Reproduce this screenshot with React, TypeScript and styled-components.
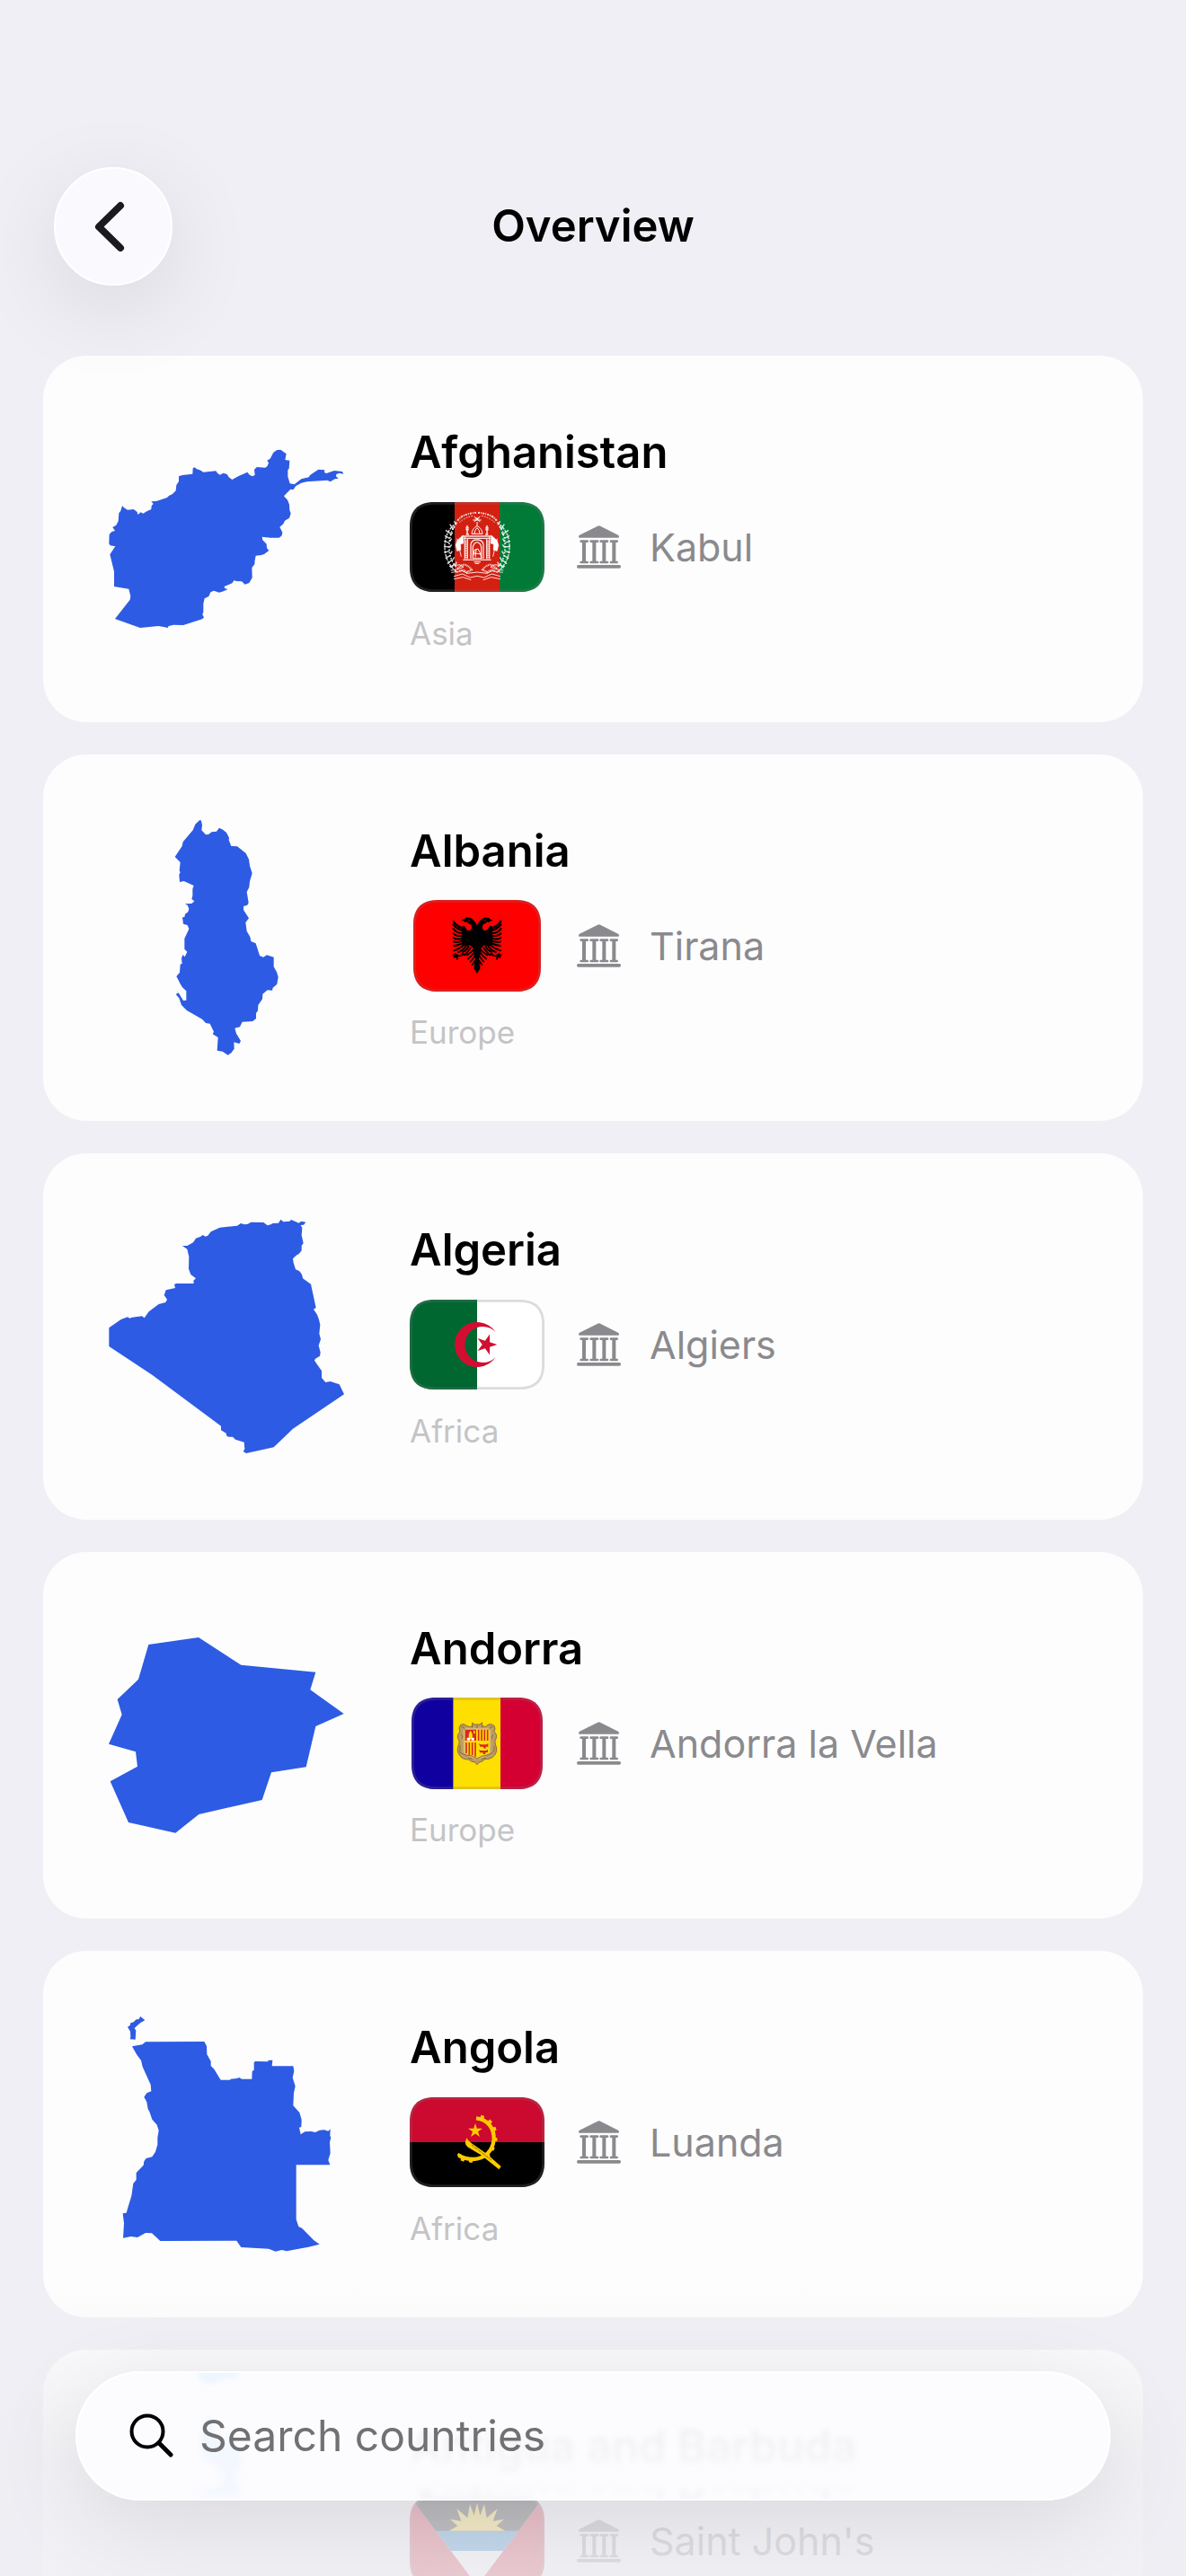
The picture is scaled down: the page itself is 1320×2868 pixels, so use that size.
import React, { useState } from 'react';
import styled, { createGlobalStyle } from 'styled-components';

interface ICountry {
  name: string;
  capital: string;
  continent?: string;
  viewBox: string;
  outline: string;
  flag: React.ReactNode;
  tint?: string;
}

const GlobalStyle = createGlobalStyle`
  * {
    box-sizing: border-box;
  }

  body {
    margin: 0;
    background: #f0eff5;
    color: #000;
    font-family: Inter, 'Liberation Sans', sans-serif;
  }
`;

const Screen = styled.div`
  position: relative;
  height: 100vh;
  overflow: hidden;
`;

const Scroller = styled.div`
  height: 100%;
  overflow-y: auto;
  scrollbar-width: none;
`;

const Header = styled.header`
  position: relative;
  z-index: 1;
  display: grid;
  grid-template-columns: 132px 1fr 132px;
  align-items: center;
  padding: 186px 60px 78px;
`;

const BackButton = styled.button`
  width: 132px;
  height: 132px;
  padding: 0;
  border: 2px solid #fff;
  border-radius: 50%;
  background: #faf9fe;
  box-shadow: 0 24px 100px rgba(0, 0, 0, 0.1);
  cursor: pointer;

  svg {
    display: block;
  }
`;

const Heading = styled.h1`
  margin: 0;
  font-size: 49px;
  line-height: 60px;
  font-weight: 600;
  text-align: center;
`;

const List = styled.ul`
  display: flex;
  flex-flow: column nowrap;
  gap: 36px;
  margin: 0;
  padding: 0 48px 36px;
  list-style: none;
`;

const Card = styled.li`
  display: flex;
  gap: 72px;
  padding: 72px;
  border-radius: 48px;
  background: #fdfdfd;
`;

const MapShape = styled.svg`
  flex: none;
  width: 264px;
  height: 264px;
  overflow: visible;
`;

const Info = styled.div`
  display: flex;
  flex-flow: column nowrap;
  gap: 24px;
  min-width: 0;
  padding-top: 6px;
`;

const Name = styled.h2<{ $mirrored: boolean }>`
  margin: 0;
  font-size: 49px;
  line-height: 60px;
  font-weight: 600;
  white-space: nowrap;
  ${({ $mirrored }) =>
    $mirrored && '-webkit-box-reflect: below -21px linear-gradient(#fff 38%, transparent 38%);'}
`;

const CapitalRow = styled.div`
  display: flex;
  align-items: center;
  height: 102px;
`;

const FlagSlot = styled.div`
  display: flex;
  justify-content: center;
  width: 150px;
  margin-right: 36px;
`;

const Capital = styled.span`
  margin-left: 32px;
  color: #8a8a8e;
  font-size: 43px;
  line-height: 54px;
  white-space: nowrap;
`;

const Continent = styled.span`
  color: #c4c4c6;
  font-size: 35px;
  line-height: 42px;
`;

const BottomFade = styled.div`
  position: absolute;
  right: 0;
  bottom: 0;
  left: 0;
  height: 320px;
  background: linear-gradient(
    rgba(240, 239, 245, 0) 0%,
    rgba(240, 239, 244, 0.35) 22%,
    rgba(239, 238, 243, 0.74) 60%,
    rgba(239, 238, 243, 0.84) 100%
  );
  pointer-events: none;
`;

const SearchBar = styled.label`
  position: absolute;
  right: 84px;
  bottom: 84px;
  left: 84px;
  display: flex;
  align-items: center;
  gap: 28px;
  height: 144px;
  padding: 0 60px;
  border-radius: 72px;
  background: rgba(253, 253, 255, 0.88);
  box-shadow:
    inset 0 0 0 2px rgba(255, 255, 255, 0.8),
    0 24px 100px rgba(0, 0, 0, 0.1);
  backdrop-filter: blur(3px);

  svg {
    flex: none;
  }
`;

const SearchInput = styled.input`
  flex: 1;
  min-width: 0;
  padding: 0;
  border: 0;
  outline: none;
  background: transparent;
  color: #000;
  font-family: inherit;
  font-size: 48px;
  line-height: 60px;

  &::placeholder {
    color: #717174;
    opacity: 1;
  }
`;

const CapitalIcon = () => (
  <svg width="49" height="48" viewBox="0 0 147 144" fill="#8a8a8e" aria-hidden="true">
    <path d="M68 3Q74 -1 80 3L138 32Q141 34 141 38Q141 41 138 41H9Q6 41 6 38Q6 34 9 32Z" />
    <path d="M14 53H35M47 53H69M80 53H102M114 53H134M14 123H35M47 123H69M80 123H102M114 123H134" stroke="#8a8a8e" strokeWidth="8" strokeLinecap="round" />
    <path d="M18 52H30V123H18ZM52 52H64V123H52ZM85 52H97V123H85ZM118 52H130V123H118Z" />
    <rect x="0" y="132" width="147" height="11" rx="5" />
  </svg>
);

interface IFlagFrameProps {
  id: string;
  width: number;
  height: number;
  edge?: string;
  children: React.ReactNode;
}

// three drawing units to each pixel
const FlagFrame: React.FC<IFlagFrameProps> = ({ id, width, height, edge = '#777', children }) => {
  const w = width * 3;
  const h = height * 3;
  const shape = `M82 0H${w - 82}C${w - 28} 0 ${w} 28 ${w} 82V${h - 82}C${w} ${h - 28} ${w - 28} ${h} ${w - 82} ${h}H82C28 ${h} 0 ${h - 28} 0 ${h - 82}V82C0 28 28 0 82 0Z`;
  return (
    <svg width={width} height={height} viewBox={`0 0 ${w} ${h}`} aria-hidden="true">
      <clipPath id={id}>
        <path d={shape} />
      </clipPath>
      <g clipPath={`url(#${id})`}>
        {children}
        <path d={shape} fill="none" stroke={edge} strokeOpacity="0.26" strokeWidth="17" />
      </g>
    </svg>
  );
};

const starPoints = (cx: number, cy: number, r: number, turn: number) =>
  Array.from({ length: 10 }, (_, i) => {
    const radius = i % 2 ? r * 0.382 : r;
    const angle = turn + (i * Math.PI) / 5;
    return `${cx + radius * Math.cos(angle)},${cy + radius * Math.sin(angle)}`;
  }).join(' ');

const EmblemHalf = () => (
  <g fill="none" stroke="#fff" strokeOpacity="0.85">
    <path d="M158 68C128 88 116 120 117 152C118 186 132 214 160 236" strokeWidth="4" strokeDasharray="9 3" />
    <path d="M150 80C136 100 132 124 132 150C132 184 143 208 166 226" strokeWidth="5" strokeDasharray="5 5" />
    <path d="M156 76L148 64M146 92L134 74M138 106L120 94M134 122L117 112M132 136L115 130M132 150L114 148M133 164L115 168M136 178L119 188M142 192L126 206M150 206L136 220M144 90L150 82M136 112L143 102M133 132L140 122M133 152L140 142M136 174L142 164M143 194L149 184M152 210L157 200" strokeWidth="4" />
    <path d="M160 62Q174 40 222 35" strokeWidth="6" strokeDasharray="7 3 3 3" />
    <path d="M166 68Q184 51 210 46" strokeWidth="3" strokeDasharray="5 4" />
    <path d="M192 78V108M187 86H197M187 92H197M188 108H198" strokeWidth="5" />
    <path d="M176 114H225M180 121H225M178 193H225M184 114V190M193 122V190" strokeWidth="4" />
    <path d="M188 128V190" strokeWidth="8" strokeDasharray="3 3" />
    <path d="M204 190V142Q206 126 225 126M211 190V150Q214 136 225 134" strokeWidth="4" />
    <path d="M158 122L172 182" strokeWidth="3" />
    <path d="M158 128L178 110L180 138L170 141L171 160L158 164L153 144Z" fill="#fff" strokeWidth="1" />
    <path d="M132 215L166 209L180 217L158 225L137 228M139 235L176 230L192 238L225 234M147 248L176 240L202 252L225 247M147 257L178 251L205 260" strokeWidth="3" />
    <path d="M164 218Q184 197 207 226L190 235Q177 221 164 232" strokeWidth="6" strokeDasharray="3 2" />
  </g>
);

const AfghanFlag = () => (
  <FlagFrame id="flag-af" width={150} height={100}>
    <path fill="#000" d="M0 0H150V300H0Z" />
    <path fill="#d32011" d="M150 0H300V300H150Z" />
    <path fill="#007a36" d="M300 0H450V300H300Z" />
    <EmblemHalf />
    <g transform="translate(450 0) scale(-1 1)">
      <EmblemHalf />
    </g>
    <g fill="none" stroke="#fff" strokeWidth="3">
      <path d="M207 106C208 92 218 82 225 80C232 82 242 92 243 106ZM216 105Q217 92 225 86Q233 92 234 105M225 80V66M211 60H239M218 54L232 54M215 48L235 66M235 48L215 66" />
      <path d="M213 178L216 160L228 156L235 170L240 188M212 188L240 188M215 171L234 173M222 157L219 184" />
      <path d="M214 200H237M218 205H232" />
    </g>
  </FlagFrame>
);

const EagleHalf = () => (
  <g>
    <path d="M213 86C211 78 204 68 195 62C187 57 175 58 169 64L160 68C166 68 169 72 174 75L181 72C178 79 190 77 194 85C198 96 191 105 182 101C174 99 177 88 168 86C162 86 164 94 157 94C151 91 146 86 143 78L132 62L139 78L148 92L162 98V150L176 154L188 150L199 160L201 178L207 198L203 220L203 230L208 237L213 246Z" />
    <path fill="none" stroke="#000" strokeWidth="6" d="M132 70Q146 88 164 93M132 80Q146 99 164 102M132 94Q144 112 164 111M132 110Q143 124 164 119M132 124Q143 136 164 127M133 138Q146 145 165 135M133 153Q150 153 168 142M133 170Q153 164 171 149M148 175Q167 170 178 151M164 174Q179 169 186 151" />
    <path fill="none" stroke="#000" strokeWidth="5" d="M205 163Q190 178 178 185M206 172Q195 188 181 198M207 184Q197 201 189 207M211 196Q202 209 196 218M193 158L181 174L171 185M193 158L174 181L151 187L131 184M151 187L134 192M151 187L137 178M145 186L147 200M171 184L161 177" />
    <circle cx="186" cy="67" r="2" fill="#f00" />
  </g>
);

const AlbanianFlag = () => (
  <FlagFrame id="flag-al" width={142} height={102}>
    <path fill="#f00" d="M0 0H426V306H0Z" />
    <EagleHalf />
    <g transform="translate(426 0) scale(-1 1)">
      <EagleHalf />
    </g>
  </FlagFrame>
);

const AlgerianFlag = () => (
  <FlagFrame id="flag-dz" width={150} height={100}>
    <path fill="#fff" d="M0 0H450V300H0Z" />
    <path fill="#006731" d="M0 0H225V300H0Z" />
    <path fill="#d30e32" d="M287 108A75 75 0 1 0 287 192A60 60 0 1 1 287 108Z" />
    <polygon fill="#d30e32" points={starPoints(256, 150, 36, 0)} />
  </FlagFrame>
);

const AndorranFlag = () => (
  <FlagFrame id="flag-ad" width={146} height={102}>
    <path fill="#1000a0" d="M0 0H140V306H0Z" />
    <path fill="#fedf00" d="M140 0H297V306H140Z" />
    <path fill="#d50032" d="M297 0H438V306H297Z" />
    <path
      fill="#bd9d61"
      stroke="#8a6c3c"
      strokeWidth="3"
      d="M203 84L210 90H228L236 83V95Q249 100 253 92Q265 84 276 94Q282 105 276 113Q287 125 283 135Q276 144 280 156Q289 176 278 192Q266 207 244 206Q238 215 225 216L219 224L212 216Q198 215 192 207Q168 207 160 192Q149 176 158 157Q163 145 155 136Q151 124 162 114Q155 101 164 91Q175 85 184 94Q191 100 203 96Z"
    />
    <path fill="#d9b877" d="M173 101H265V184Q243 203 219 207Q195 203 173 184Z" />
    <path fill="#fedf00" d="M179 107H260V185Q240 196 219 199Q198 196 179 185Z" />
    <path fill="#d52b1e" d="M179 107H216V144H179Z" />
    <path fill="#fedf00" d="M197 111Q207 121 202 139H193Q187 124 197 111ZM207 110L212 112V121L207 119Z" />
    <path fill="#fff" d="M185 134H196V143H185ZM200 134H209V143H200Z" />
    <path stroke="#d52b1e" strokeWidth="5" d="M224 107V144M234 107V144M244 107V144M254 107V144M183 150V186M193 150V191M203 150V193M213 150V197" />
    <path fill="#d52b1e" d="M225 154L231 157H250L256 153V164H248V170H243L239 164H229ZM225 175L231 177H249L255 173V183H247V189H240L238 184H229Z" />
    <path fill="none" stroke="#8a6c3c" strokeWidth="3" d="M166 99Q176 95 177 107M272 99Q261 95 261 107M162 160V184Q177 194 202 195L219 205L236 195Q263 193 276 178V162M165 123Q175 129 168 137M273 123Q264 129 270 138M190 202L204 205M248 202L233 205M203 91V100M236 91V100M219 92V102" />
  </FlagFrame>
);

const AngolanFlag = () => (
  <FlagFrame id="flag-ao" width={150} height={100}>
    <path fill="#cc092f" d="M0 0H450V150H0Z" />
    <path fill="#000" d="M0 150H450V300H0Z" />
    <g fill="none" stroke="#ffcb00">
      <path d="M222 70C264 75 282 106 281 140C278 178 252 206 211 207C194 207 178 203 163 194" strokeWidth="13" />
      <path d="M244 61L239 76M272 78L262 87M288 104L277 108M292 141L280 141M282 174L270 169M265 199L257 190M203 218L205 207M175 213L179 201" strokeWidth="12" />
      <path d="M163 197L168 189" strokeWidth="12" />
    </g>
    <path fill="#ffcb00" d="M191 136C183 150 184 159 195 167L238 193L298 241L305 231L257 189L206 153Q194 146 191 136Z" />
    <path fill="none" stroke="#000" strokeWidth="2" strokeDasharray="3 2" d="M207 159L273 210" />
    <polygon fill="#ffcb00" points={starPoints(219, 112, 25, -Math.PI / 2)} />
  </FlagFrame>
);

const AntiguanFlag = () => (
  <FlagFrame id="flag-ag" width={150} height={100}>
    <path fill="#ce1126" d="M0 0H450V300H0Z" />
    <path fill="#fff" d="M0 0H450L225 300Z" />
    <path fill="#0072c6" d="M0 0H450L313 183H137Z" />
    <path fill="#000" d="M0 0H450L363 116H87Z" />
    <path fill="#fcd116" d="M131 116L160 100L135 77L172 84L157 42L193 73L201 27L215 65L225 23L235 65L249 27L257 73L293 42L278 84L315 77L290 100L319 116Z" />
  </FlagFrame>
);

const countries: ICountry[] = [
  {
    name: 'Afghanistan',
    capital: 'Kabul',
    continent: 'Asia',
    viewBox: '60 -36 792 792',
    outline:
      'M108 249L114 256L126 263L146 261L158 270L160 279L170 271L178 275L190 268L205 261L206 249L212 243L205 235L222 234L258 222L264 216L276 210L287 199L289 180L297 168V151L309 147L343 143L344 124L350 121L356 126L370 131L379 137L421 133L426 140L434 146L446 140L458 144L464 154L475 162L497 150L526 137L534 147L544 151L551 146L549 128L558 120L586 122L593 116L597 106L592 98L602 92L613 71L625 63L637 62L656 76L652 96L667 98L665 125L661 130V152L668 175L683 178L706 160L731 154L736 146L763 128L784 130L783 138L790 141L816 132L843 135L847 143L833 140L823 144L822 151L830 158L818 160L803 169L793 164L724 169L706 173L688 183L679 196L670 194L648 217L660 230L666 245L667 264L671 275L666 290L651 299L646 310L634 320L643 338L641 349L632 356L603 356L575 353L577 364L590 377L591 391L598 399L583 410L573 414L554 416L551 431L550 445L541 456L542 490L532 507L518 512L507 502L488 501L482 498L475 508L449 519L450 525L461 528L446 535L432 539L414 533L403 538L397 552L383 559L379 577V604L376 613L381 622L375 628L312 648L279 647L263 651L260 657L247 654L229 651L168 657L84 627L134 563L136 551L130 527L81 519V469L67 412L85 385L68 382L64 376L65 345L73 336L84 333L76 321L88 314L95 301L97 274L103 266Z',
    flag: <AfghanFlag />,
  },
  {
    name: 'Albania',
    capital: 'Tirana',
    continent: 'Europe',
    viewBox: '-120 66 792 792',
    outline:
      'M187 69L192 71L195 86L193 103L207 118L216 117L227 109L243 107L252 95L264 101L276 111L285 128L284 136L292 156L312 157L341 180L351 200L354 222L362 247L354 274L352 293L344 309L350 345L346 353L333 357L333 369L351 397L340 411L344 440L355 459L358 474L374 481L387 522L399 527L411 520L434 527L434 559L444 577L449 593L445 617L431 629L429 638L413 637L397 650L396 667L382 687L381 706L375 714V732L364 741L329 743L321 760L304 764L309 782L324 807L319 816L301 811L302 833L292 847L281 854L263 842L245 839L248 795L230 784L234 776L221 749L207 747L195 734L144 705L126 687L118 664L107 651L116 646L132 672L142 671V640L129 628L123 618L109 591L120 578L122 551L128 548L126 531L130 519L137 526L145 509L136 500V465L151 433L146 420L132 416L129 394L136 393L138 383L148 376L151 365L146 353L137 349L160 348L169 340L160 333L163 322V299L167 288L134 273L120 276L118 251L122 244L119 238L122 210L104 192L128 156L131 142L164 103L172 83Z',
    flag: <AlbanianFlag />,
  },
  {
    name: 'Algeria',
    capital: 'Algiers',
    continent: 'Africa',
    viewBox: '60 48 792 792',
    outline:
      'M309 141L325 141L345 130L354 116L370 110L377 105L386 110L394 107L404 94L434 80L492 74L504 66L516 70L528 68L538 62L580 63L593 73L604 70L611 66L630 65L637 53L646 61L667 59L672 54L688 61L697 65L706 59L721 62L714 71L704 72L709 81L707 106L713 133L707 140V157L698 168L689 173L678 184L680 198L687 220L700 226L708 237L711 250L738 269L755 348L747 353L759 371L765 388L769 405L766 434L771 453L764 474L770 497L768 509L753 518L750 524L774 559V582L787 597L803 594L833 604L849 637L678 752L614 814L522 834L512 828L517 820L515 797L486 788L477 779H464L457 776L455 767L438 757V743L209 573L64 477V415L104 387L126 379L133 383L141 380L174 376L182 382L197 361L230 336L253 330L258 320L248 306L254 289L285 282L282 270L289 267H347L346 257L354 250L337 237L330 218L331 178L325 152Z',
    flag: <AlgerianFlag />,
  },
  {
    name: 'Andorra',
    capital: 'Andorra la Vella',
    continent: 'Europe',
    viewBox: '60 0 792 792',
    outline:
      'M196 93L363 69L505 161L754 185L736 244L848 324L754 366L722 502L606 520L575 612L364 660L286 722L129 687L68 550L159 500L153 451L63 425L107 327L92 276L162 209Z',
    flag: <AndorranFlag />,
  },
  {
    name: 'Angola',
    capital: 'Luanda',
    continent: 'Africa',
    viewBox: '60 72 792 792',
    outline:
      'M169 75L184 88L168 97L149 114L154 122L152 152L134 151L136 143L135 125L126 110L134 105L136 97L146 94L155 85H163ZM141 175L175 169L186 160L382 159L390 174L391 202L404 225V240L415 251L437 287L468 287L470 284L491 282L499 279L507 284H541L542 258L548 254V228L553 225L595 226L596 221H610L608 241H679L682 257L677 280L686 308L681 330L679 373L700 396L707 420L706 444L699 446L704 469L718 460L739 459L753 462L767 455L783 454L796 458L803 451L802 474L805 479L801 495L803 532L796 555L802 571H689V753L697 777L708 782L748 823L767 836L730 845L657 859L641 855L620 860L597 851L505 846L490 824L235 825L207 799L186 798L159 813L137 810L111 815L114 766L110 733L122 731L128 710L139 674L145 633L155 621V597L179 572L181 559L188 549L208 544L219 527L226 503V480L230 456L224 437L208 419L199 393L194 384L190 361L181 344L190 331L205 325L203 303L176 243L171 222L156 202Z',
    flag: <AngolanFlag />,
  },
  {
    name: 'Antigua and Barbuda',
    capital: "Saint John's",
    viewBox: '0 0 264 264',
    outline:
      'M100 -46H147L141 -40H128L116 -33L104 -38ZM108 2Q116 4 118 22Q134 28 148 40L149 56Q147 64 141 70Q145 76 149 82L148 92H102L106 84Q124 82 128 70Q125 60 112 53L101 41Z',
    flag: <AntiguanFlag />,
    tint: '#008cff',
  },
];

const CountryCard: React.FC<{ country: ICountry }> = ({ country }) => (
  <Card>
    <MapShape viewBox={country.viewBox} aria-hidden="true">
      <path d={country.outline} fill={country.tint || '#2d5be3'} />
    </MapShape>
    <Info>
      <Name $mirrored={Boolean(country.tint)}>{country.name}</Name>
      <CapitalRow>
        <FlagSlot>{country.flag}</FlagSlot>
        <CapitalIcon />
        <Capital>{country.capital}</Capital>
      </CapitalRow>
      {country.continent && <Continent>{country.continent}</Continent>}
    </Info>
  </Card>
);

const App: React.FC = () => {
  const [query, setQuery] = useState('');
  const visible = countries.filter(({ name }) =>
    name.toLowerCase().includes(query.trim().toLowerCase())
  );

  return (
    <Screen>
      <GlobalStyle />
      <Scroller>
        <Header>
          <BackButton type="button" aria-label="Back">
            <svg width="128" height="128" viewBox="0 0 128 128" fill="none" aria-hidden="true">
              <path d="M72 41L48 64.500L72 88" stroke="#1b1a1f" strokeWidth="8" strokeLinecap="round" strokeLinejoin="round" />
            </svg>
          </BackButton>
          <Heading>Overview</Heading>
        </Header>
        <List>
          {visible.map((country) => (
            <CountryCard key={country.name} country={country} />
          ))}
        </List>
      </Scroller>
      <BottomFade />
      <SearchBar>
        <svg width="50" height="50" viewBox="0 0 50 50" fill="none" stroke="#000" aria-hidden="true">
          <circle cx="20" cy="20" r="17.500" strokeWidth="4" />
          <path d="M33 33L46 46" strokeWidth="5" strokeLinecap="round" />
        </svg>
        <SearchInput
          type="text"
          aria-label="Search countries"
          placeholder="Search countries"
          value={query}
          onChange={(event) => setQuery(event.target.value)}
        />
      </SearchBar>
    </Screen>
  );
};

export default App;
